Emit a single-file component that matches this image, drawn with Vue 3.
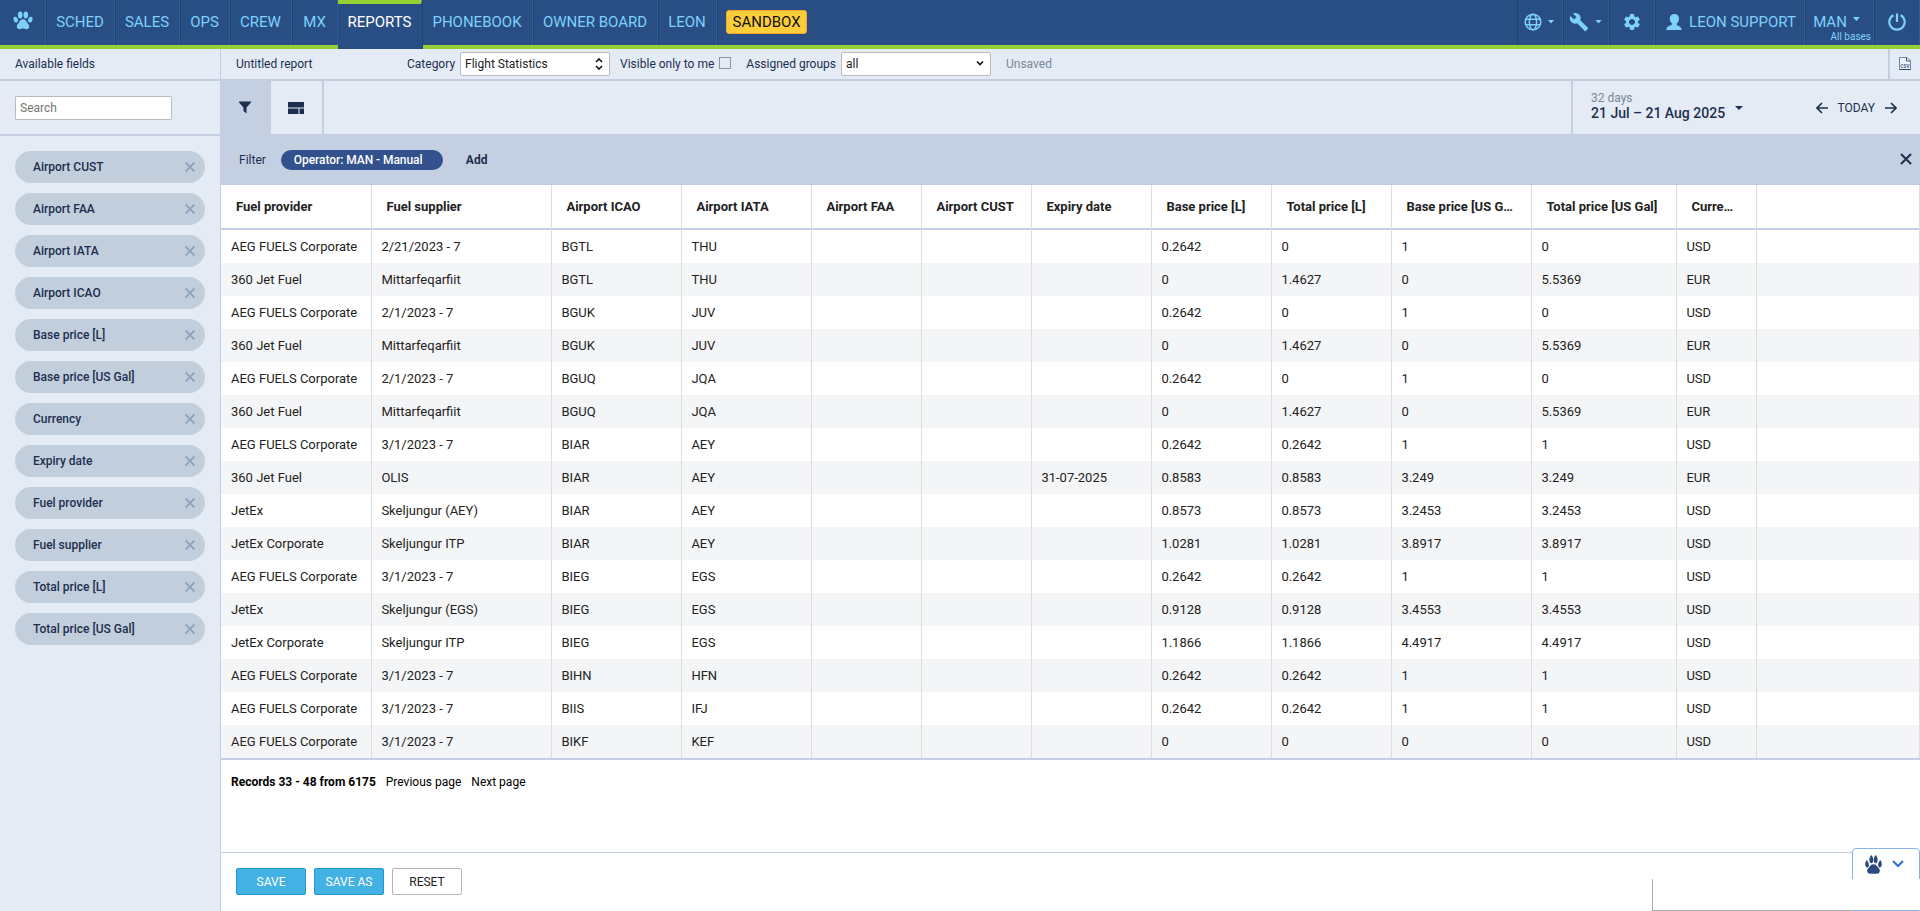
<template>
  <div class="app">
    <header class="topbar">
      <a class="nav-item logo">
        <svg width="20" height="19" viewBox="0 0 20 19" fill="currentColor">
          <ellipse cx="7.2" cy="4" rx="2.3" ry="3.4" />
          <ellipse cx="12.8" cy="4" rx="2.3" ry="3.4" />
          <ellipse cx="2.7" cy="8.6" rx="2.1" ry="3" transform="rotate(-22 2.7 8.6)" />
          <ellipse cx="17.3" cy="8.6" rx="2.1" ry="3" transform="rotate(22 17.3 8.6)" />
          <path d="M10 8.2c2.3 0 3.2 1.7 4 3.2.8 1.300 2.200 2.100 2.200 4.100 0 1.700-1.200 2.700-2.700 2.700-1.300 0-2.200-.7-3.500-.7s-2.200.7-3.500.7c-1.500 0-2.700-1-2.700-2.700 0-2 1.400-2.800 2.200-4.100.8-1.500 1.700-3.200 4-3.200z" />
        </svg>
      </a>
      <a
        v-for="item in menu"
        :key="item.label"
        class="nav-item"
        :class="{ active: item.active }"
        :style="{ width: item.width + 'px' }"
      >{{ item.label }}</a>
      <span class="sandbox">SANDBOX</span>
      <div class="nav-right">
        <a class="nav-item globe">
          <svg width="18" height="18" viewBox="0 0 18 18" fill="none" stroke="currentColor" stroke-width="1.5">
            <circle cx="9" cy="9" r="7.800" />
            <ellipse cx="9" cy="9" rx="3.600" ry="7.800" />
            <path d="M1.800 6.300h14.400M1.800 11.700h14.400" />
          </svg>
          <i class="caret"></i>
        </a>
        <a class="nav-item wrench">
          <svg width="20" height="20" viewBox="0 0 24 24" fill="currentColor">
            <path d="M22.700 19l-9.100-9.100c.9-2.300.4-5-1.500-6.900-2-2-5-2.400-7.400-1.300L9 6 6 9 1.600 4.700C.4 7.100.9 10.100 2.900 12.100c1.900 1.900 4.600 2.400 6.900 1.500l9.100 9.100c.4.4 1 .4 1.400 0l2.300-2.300c.5-.4.5-1.100.1-1.400z" />
          </svg>
          <i class="caret"></i>
        </a>
        <a class="nav-item gear">
          <svg width="20" height="20" viewBox="0 0 24 24" fill="currentColor">
            <path d="M19.140 12.940c.04-.3.060-.61.060-.94s-.02-.64-.07-.94l2.030-1.580c.18-.14.230-.41.120-.61l-1.920-3.320c-.12-.22-.37-.29-.59-.22l-2.390.96c-.5-.38-1.030-.7-1.620-.94L14.400 2.810c-.04-.24-.24-.41-.48-.41h-3.840c-.24 0-.43.170-.47.410L9.250 5.350c-.59.240-1.130.57-1.620.94L5.240 5.330c-.22-.08-.47 0-.59.220L2.740 8.870c-.12.210-.08.470.12.610l2.030 1.580c-.05.3-.09.630-.09.940s.02.640.070.940l-2.030 1.580c-.18.140-.23.410-.12.610l1.920 3.320c.12.220.37.290.59.220l2.390-.96c.5.380 1.030.7 1.620.94l.36 2.540c.05.240.24.410.48.410h3.840c.24 0 .44-.17.470-.41l.36-2.540c.59-.24 1.130-.56 1.620-.94l2.390.96c.22.080.47 0 .59-.22l1.920-3.320c.12-.22.070-.47-.12-.61l-2.010-1.580zM12 15.600c-1.980 0-3.600-1.620-3.600-3.600s1.620-3.600 3.600-3.600 3.600 1.620 3.600 3.600-1.620 3.600-3.600 3.600z" />
          </svg>
        </a>
        <a class="nav-item user">
          <svg width="16" height="16" viewBox="0 0 16 16" fill="currentColor">
            <path d="M8.500 0c2.900 0 4.500 1.900 4.500 4.700 0 2.300-1 3.900-2.200 5v1.500c2 .8 4.600 1.500 4.900 4.800H.3c.2-3.300 2.400-4 4.700-4.800l1.300-1.400C4.900 8.700 3.700 7.100 3.700 4.800 3.700 1.900 5.600 0 8.500 0z" />
          </svg>
          LEON SUPPORT
        </a>
        <a class="nav-item operator">
          MAN <i class="caret"></i>
          <small>All bases</small>
        </a>
        <a class="nav-item power">
          <svg width="18" height="18" viewBox="0 0 18 18" fill="none" stroke="currentColor" stroke-width="2.200">
            <path d="M5.400 2.200a7.700 7.700 0 1 0 7.200 0M9 .5v8.500" />
          </svg>
        </a>
      </div>
    </header>

    <div class="body">
      <aside class="sidebar">
        <div class="sidebar-title">Available fields</div>
        <div class="search"><input type="text" placeholder="Search"></div>
        <ul class="fields">
          <li v-for="field in fields" :key="field">
            <span>{{ field }}</span>
            <svg width="10" height="10" viewBox="0 0 10 10"><path d="M.5.5l9 9M9.500.5l-9 9" /></svg>
          </li>
        </ul>
      </aside>

      <main class="content">
        <div class="report-bar">
          <span class="report-name">Untitled report</span>
          <span class="label">Category</span>
          <div class="select category">
            Flight Statistics
            <svg width="8" height="12" viewBox="0 0 8 12"><path d="M1 4l3-3 3 3M1 8l3 3 3-3" /></svg>
          </div>
          <span class="label visible">Visible only to me</span>
          <i class="checkbox"></i>
          <span class="label groups">Assigned groups</span>
          <div class="select all">
            all
            <svg width="8" height="8" viewBox="0 0 8 8"><path d="M1 1.500l3 3 3-3" /></svg>
          </div>
          <span class="unsaved">Unsaved</span>
          <a class="csv">
            <svg width="12" height="13" viewBox="0 0 12 13">
              <path d="M.5.5h7.500l3.500 3v9H.5z" fill="#eef3fb" stroke="#6d86a8" />
              <path d="M7.500.5v3.500h4" fill="none" stroke="#40587c" />
              <text x="1.500" y="10.500" textLength="9">CSV</text>
              <path d="M.5 12.500h11" stroke="#2d456b" />
            </svg>
          </a>
        </div>

        <div class="toolbar">
          <a class="tool selected">
            <svg width="12" height="13" viewBox="0 0 12 13" fill="#1c2f4f"><path d="M0 .5h12v1L7.500 6.500v6L4.500 10V6.500L0 1.500z" /></svg>
          </a>
          <a class="tool">
            <svg width="16" height="12" viewBox="0 0 16 12" fill="#1c2f4f"><path d="M0 0h16v5.500H0zM0 6.500h10.500V12H0zM11.500 6.500H16V12h-4.500z" /></svg>
          </a>
          <div class="period">
            <div class="dates">
              <span class="days">32 days</span>
              <strong>21 Jul – 21 Aug 2025</strong>
            </div>
            <i class="caret"></i>
            <div class="today">
              <svg width="12" height="12" viewBox="0 0 12 12"><path d="M12 6H1M6 1L1 6l5 5" /></svg>
              <span>TODAY</span>
              <svg width="12" height="12" viewBox="0 0 12 12"><path d="M0 6h11M6 1l5 5-5 5" /></svg>
            </div>
          </div>
        </div>

        <div class="filter-bar">
          <span>Filter</span>
          <span class="pill">Operator: MAN - Manual</span>
          <b>Add</b>
          <svg width="12" height="12" viewBox="0 0 12 12"><path d="M1 1l10 10M11 1L1 11" /></svg>
        </div>

        <table class="grid">
          <colgroup>
            <col v-for="col in columns" :key="col.title" :style="{ width: col.width + 'px' }">
            <col>
          </colgroup>
          <thead>
            <tr>
              <th v-for="col in columns" :key="col.title">{{ col.title }}</th>
              <th></th>
            </tr>
          </thead>
          <tbody>
            <tr v-for="(row, i) in rows" :key="i">
              <td v-for="(cell, j) in row" :key="j">{{ cell }}</td>
              <td></td>
            </tr>
          </tbody>
        </table>

        <div class="pager">
          <b>Records 33 - 48 from 6175</b>
          <a>Previous page</a>
          <a>Next page</a>
        </div>

        <footer class="actions">
          <button class="primary">SAVE</button>
          <button class="primary">SAVE AS</button>
          <button>RESET</button>
        </footer>
      </main>
    </div>

    <div class="help-tab">
      <svg width="17" height="19" viewBox="0 0 17 19" fill="#2d4a80">
        <path d="M6.300 0c1.200 1.400 2 3.200 2 5 0 1.700-.7 3.200-1.900 3.200S4.300 6.700 4.300 5c0-1.800.8-3.600 2-5zM10.700 0c1.200 1.400 2 3.200 2 5 0 1.700-.9 3.200-2.100 3.200S8.700 6.700 8.700 5c0-1.800.8-3.600 2-5zM1.600 5c1.200 1.200 2.300 3 2.300 4.900 0 1.400-.6 2.600-1.700 2.600S.2 11 .2 9.300C.2 7.600.8 6.200 1.600 5zM15.400 5c.8 1.200 1.400 2.600 1.400 4.300 0 1.700-.9 3.200-2 3.200s-1.700-1.200-1.700-2.600c0-1.900 1.100-3.700 2.300-4.900zM8.500 9.200c2.200 0 3.200 1.400 4 2.600.9 1.300 2.300 2.100 2.300 4 0 1.500-.9 2.600-2.200 2.900l-1.600-.3-1 .6-1.500-.5-1.500.5-1-.6-1.600.3c-1.300-.3-2.200-1.400-2.200-2.900 0-1.900 1.400-2.700 2.300-4 .8-1.200 1.800-2.600 4-2.600z" />
      </svg>
      <svg class="chevron" width="12" height="8" viewBox="0 0 12 8"><path d="M1 1l5 5 5-5" /></svg>
    </div>
    <div class="help-panel"></div>
  </div>
</template>

<script setup>
const menu = [
  { label: 'SCHED', width: 69 },
  { label: 'SALES', width: 65 },
  { label: 'OPS', width: 50 },
  { label: 'CREW', width: 62 },
  { label: 'MX', width: 46 },
  { label: 'REPORTS', width: 84, active: true },
  { label: 'PHONEBOOK', width: 111 },
  { label: 'OWNER BOARD', width: 125 },
  { label: 'LEON', width: 59 }
]

const fields = [
  'Airport CUST', 'Airport FAA', 'Airport IATA', 'Airport ICAO',
  'Base price [L]', 'Base price [US Gal]', 'Currency', 'Expiry date',
  'Fuel provider', 'Fuel supplier', 'Total price [L]', 'Total price [US Gal]'
]

const columns = [
  { title: 'Fuel provider', width: 151 },
  { title: 'Fuel supplier', width: 180 },
  { title: 'Airport ICAO', width: 130 },
  { title: 'Airport IATA', width: 130 },
  { title: 'Airport FAA', width: 110 },
  { title: 'Airport CUST', width: 110 },
  { title: 'Expiry date', width: 120 },
  { title: 'Base price [L]', width: 120 },
  { title: 'Total price [L]', width: 120 },
  { title: 'Base price [US Gal]', width: 140 },
  { title: 'Total price [US Gal]', width: 145 },
  { title: 'Currency', width: 80 }
]

const AEG = 'AEG FUELS Corporate'
const JET = '360 Jet Fuel'

const rows = [
  [AEG, '2/21/2023 - 7', 'BGTL', 'THU', '', '', '', '0.2642', '0', '1', '0', 'USD'],
  [JET, 'Mittarfeqarfiit', 'BGTL', 'THU', '', '', '', '0', '1.4627', '0', '5.5369', 'EUR'],
  [AEG, '2/1/2023 - 7', 'BGUK', 'JUV', '', '', '', '0.2642', '0', '1', '0', 'USD'],
  [JET, 'Mittarfeqarfiit', 'BGUK', 'JUV', '', '', '', '0', '1.4627', '0', '5.5369', 'EUR'],
  [AEG, '2/1/2023 - 7', 'BGUQ', 'JQA', '', '', '', '0.2642', '0', '1', '0', 'USD'],
  [JET, 'Mittarfeqarfiit', 'BGUQ', 'JQA', '', '', '', '0', '1.4627', '0', '5.5369', 'EUR'],
  [AEG, '3/1/2023 - 7', 'BIAR', 'AEY', '', '', '', '0.2642', '0.2642', '1', '1', 'USD'],
  [JET, 'OLIS', 'BIAR', 'AEY', '', '', '31-07-2025', '0.8583', '0.8583', '3.249', '3.249', 'EUR'],
  ['JetEx', 'Skeljungur (AEY)', 'BIAR', 'AEY', '', '', '', '0.8573', '0.8573', '3.2453', '3.2453', 'USD'],
  ['JetEx Corporate', 'Skeljungur ITP', 'BIAR', 'AEY', '', '', '', '1.0281', '1.0281', '3.8917', '3.8917', 'USD'],
  [AEG, '3/1/2023 - 7', 'BIEG', 'EGS', '', '', '', '0.2642', '0.2642', '1', '1', 'USD'],
  ['JetEx', 'Skeljungur (EGS)', 'BIEG', 'EGS', '', '', '', '0.9128', '0.9128', '3.4553', '3.4553', 'USD'],
  ['JetEx Corporate', 'Skeljungur ITP', 'BIEG', 'EGS', '', '', '', '1.1866', '1.1866', '4.4917', '4.4917', 'USD'],
  [AEG, '3/1/2023 - 7', 'BIHN', 'HFN', '', '', '', '0.2642', '0.2642', '1', '1', 'USD'],
  [AEG, '3/1/2023 - 7', 'BIIS', 'IFJ', '', '', '', '0.2642', '0.2642', '1', '1', 'USD'],
  [AEG, '3/1/2023 - 7', 'BIKF', 'KEF', '', '', '', '0', '0', '0', '0', 'USD']
]
</script>

<style>
body {
  margin: 0;
  overflow: hidden;
}
</style>

<style scoped>
.app {
  position: relative;
  display: flex;
  flex-direction: column;
  height: 100vh;
  font-family: Roboto, "Liberation Sans", sans-serif;
  font-size: 12px;
  color: #1c2f4f;
  background: #fff;
}

.app * {
  box-sizing: border-box;
}

svg {
  display: block;
  flex: none;
}

/* top navigation */
.topbar {
  display: flex;
  height: 49px;
  flex: none;
  background: #294e84;
  border-bottom: 4px solid #96d035;
}

.nav-item {
  position: relative;
  display: flex;
  align-items: center;
  justify-content: center;
  height: 45px;
  padding-bottom: 2px;
  border-right: 1px solid #2d5e93;
  box-shadow: 1px 0 0 #1b4470;
  font-size: 15px;
  white-space: nowrap;
  color: #7dd1fc;
}

.logo {
  width: 46px;
  padding-bottom: 4px;
}

.nav-item.active {
  height: 49px;
  padding-bottom: 10px;
  border-top: 4px solid #96d035;
  border-right-color: #294e84;
  background: #294e84;
  color: #fff;
}

.sandbox {
  height: 24px;
  margin: 10px 0 0 9px;
  padding: 0 5.5px;
  border: 1px solid #f7a531;
  border-radius: 3px;
  background: #fdcd3a;
  color: #111;
  font-size: 15px;
  line-height: 22px;
}

.nav-right {
  display: flex;
  margin-left: auto;
  box-shadow: inset 1px 0 0 #1b4470;
}

.caret {
  border: 3.5px solid transparent;
  border-top: 4px solid currentColor;
  border-bottom: 0;
}

.nav-item .caret {
  width: 7px;
  height: 4px;
  border: 0;
  background: currentColor;
  clip-path: polygon(0 0, 100% 0, 50% 100%);
}

.globe,
.wrench,
.gear {
  width: 46px;
  gap: 6px;
}

.globe {
  padding-right: 1px;
}

.gear {
  padding-left: 1px;
}

.user {
  width: 150px;
  padding-left: 3px;
  gap: 7px;
}

.operator {
  width: 69px;
  padding-right: 5px;
  gap: 6px;
}

.operator .caret {
  margin-top: -5px;
}

.operator small {
  position: absolute;
  right: 2px;
  top: 30px;
  font-size: 10px;
  line-height: 13px;
}

.power {
  width: 46px;
}

.body {
  display: flex;
  flex: 1;
  min-height: 0;
}

/* available fields */
.sidebar {
  width: 221px;
  flex: none;
  border-right: 1px solid #c3cee3;
  background: #e4ebf5;
}

.sidebar-title {
  height: 32px;
  padding-left: 15px;
  border-bottom: 2px solid #c3cee3;
  line-height: 30px;
}

.search {
  height: 55px;
  padding: 15px;
  border-bottom: 2px solid #c3cee3;
}

.search input {
  display: block;
  width: 157px;
  height: 24px;
  padding: 0 4px;
  border: 1px solid #bbb;
  border-radius: 1px;
  font: 12px Roboto, sans-serif;
}

.search input::placeholder {
  color: #757575;
}

.fields {
  display: flex;
  flex-direction: column;
  gap: 10px;
  margin: 0;
  padding: 15px;
  list-style: none;
}

.fields li {
  display: flex;
  align-items: center;
  justify-content: space-between;
  height: 32px;
  padding: 0 10px 0 18px;
  border-radius: 16px;
  background: #c2cedb;
  font-weight: 500;
}

.fields svg {
  stroke: #8fa2bb;
  stroke-width: 1.9;
}

.content {
  display: flex;
  flex-direction: column;
  flex: 1;
  min-width: 0;
}

/* report settings */
.report-bar {
  display: flex;
  align-items: center;
  height: 32px;
  flex: none;
  padding-left: 15px;
  border-bottom: 2px solid #c3cee3;
  background: #e4ebf5;
}

.report-name {
  width: 171px;
}

.select {
  display: flex;
  align-items: center;
  justify-content: space-between;
  width: 150px;
  height: 24px;
  padding: 0 6px 0 4px;
  border: 1px solid #bbb;
  border-radius: 2px;
  background: #fff;
  color: #222;
}

.select svg {
  fill: none;
  stroke: #111;
  stroke-width: 1.6;
}

.select.category {
  margin-left: 5px;
}

.label.visible {
  margin-left: 10px;
}

.checkbox {
  width: 12px;
  height: 12px;
  margin: 0 0 2px 5px;
  border: 1px solid #8d949f;
}

.label.groups {
  margin-left: 15px;
}

.select.all {
  margin-left: 5px;
}

.unsaved {
  margin-left: 15px;
  color: #7b8798;
}

.csv {
  display: flex;
  justify-content: center;
  width: 32px;
  height: 30px;
  margin-left: auto;
  padding-top: 8px;
  border-left: 2px solid #c3cee3;
}

.csv text {
  font-size: 4.5px;
  font-weight: 700;
  fill: #40587c;
}

/* view tools and period */
.toolbar {
  display: flex;
  height: 53px;
  flex: none;
  background: #e4ebf5;
}

.tool {
  display: flex;
  align-items: center;
  justify-content: center;
  width: 50px;
  padding-right: 2px;
}

.tool.selected {
  background: #c4d0e1;
}

.tool + .tool {
  width: 53px;
  padding-right: 1px;
  border-right: 2px solid #c3cee3;
}

.period {
  display: flex;
  align-items: center;
  width: 349px;
  margin-left: auto;
  padding: 0 23px 0 18px;
  border-left: 2px solid #c3cee3;
}

.dates {
  display: flex;
  flex-direction: column;
  padding-bottom: 3px;
}

.dates .days {
  color: #7b8798;
  line-height: 15px;
}

.dates strong {
  font-size: 14px;
  font-weight: 500;
  line-height: 15px;
}

.period .caret {
  margin-left: 10px;
  border-width: 4px 4px 0;
}

.today {
  display: flex;
  align-items: center;
  gap: 10px;
  margin-left: auto;
}

.today svg {
  fill: none;
  stroke: #1c2f4f;
  stroke-width: 1.6;
}

.filter-bar {
  display: flex;
  align-items: center;
  height: 51px;
  flex: none;
  padding: 0 8px 0 18px;
  background: #c4d0e1;
}

.pill {
  width: 162px;
  height: 20px;
  margin: 0 23px 0 15px;
  padding-left: 13px;
  border-radius: 10px;
  background: #33518d;
  color: #fff;
  font-weight: 500;
  letter-spacing: -0.06px;
  line-height: 20px;
}

.filter-bar svg {
  margin: 0 0 2px auto;
  stroke: #1c2f4f;
  stroke-width: 2;
}

/* data grid */
.grid {
  width: 100%;
  flex: none;
  table-layout: fixed;
  border-collapse: separate;
  border-spacing: 0;
  border-bottom: 2px solid #c4d0e1;
  color: #222;
  font-size: 13px;
}

.grid th,
.grid td {
  height: 33px;
  padding: 0 10px 0 9.4px;
  border-right: 1px solid #ddd;
  overflow: hidden;
  text-align: left;
  text-overflow: ellipsis;
  white-space: nowrap;
}

.grid td:first-child {
  padding-left: 10px;
}

.grid th {
  height: 45px;
  padding: 0 16px 0 14.4px;
  border-bottom: 2px solid #c4d0e1;
  font-size: 13px;
  font-weight: 700;
}

.grid th:first-child {
  padding-left: 15px;
}

.grid tbody tr:nth-child(even) {
  background: #f4f5f7;
}

.pager {
  display: flex;
  gap: 10px;
  padding: 14px 10px;
  color: #000;
  line-height: 16px;
}

.actions {
  display: flex;
  gap: 8px;
  height: 59px;
  margin-top: auto;
  padding: 15px;
  border-top: 1px solid #c3d0e2;
}

.actions button {
  width: 70px;
  height: 27px;
  padding: 0;
  border: 1px solid #b5b5b5;
  border-radius: 2px;
  background: #fff;
  color: #222;
  font: 12px Roboto, sans-serif;
}

.actions .primary {
  border-color: #2398ce;
  background: #41b2e3;
  color: #fff;
}

/* floating help tab */
.help-tab {
  position: absolute;
  right: 0;
  bottom: 0;
  display: flex;
  gap: 10px;
  width: 68px;
  height: 63px;
  padding: 6px 0 0 12px;
  border: 1px solid #8bb2e8;
  border-radius: 4px 4px 0 0;
  background: #fff;
}

.chevron {
  margin-top: 5px;
  fill: none;
  stroke: #2a70d8;
  stroke-width: 2;
}

.help-panel {
  position: absolute;
  right: 0;
  bottom: 1px;
  width: 268px;
  height: 31px;
  border-left: 1px solid #aaa;
  background: #fff;
  box-shadow: -68px 1px 0 #aaa;
  clip-path: inset(0 0 -1px 0);
}
</style>
